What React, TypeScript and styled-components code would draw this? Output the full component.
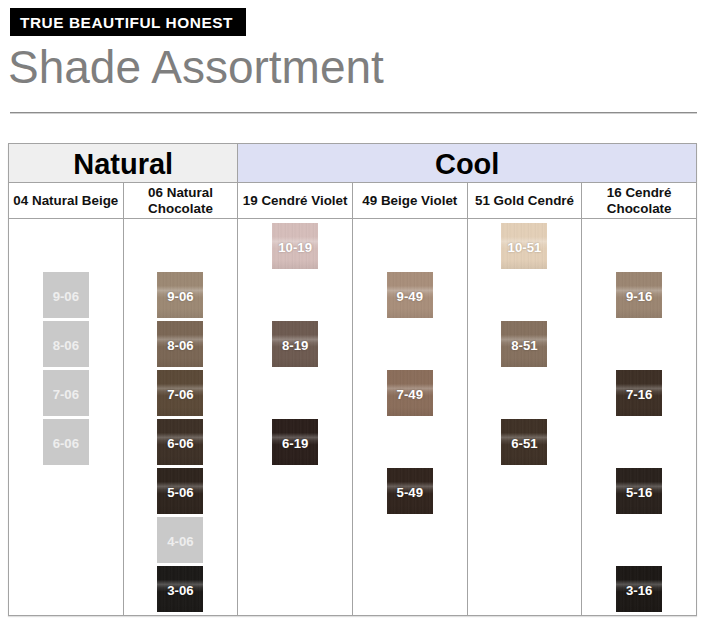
import React from "react";
import styled, { createGlobalStyle } from "styled-components";

const Global = createGlobalStyle`
  html, body { margin: 0; padding: 0; background: #ffffff; }
  body { font-family: "Liberation Sans", Arial, sans-serif; }
`;

const Page = styled.div`
  width: 715px;
  height: 642px;
  box-sizing: border-box;
  padding: 8px 18px 0 8px;
  display: flex;
  flex-direction: column;
  overflow: hidden;
`;

const Badge = styled.div`
  align-self: flex-start;
  margin-left: 2px;
  height: 28px;
  width: 236px;
  box-sizing: border-box;
  background: #000;
  color: #fff;
  font-weight: 700;
  font-size: 15.4px;
  letter-spacing: 0.55px;
  line-height: 29px;
  padding-left: 10px;
  white-space: nowrap;
`;

const Title = styled.h1`
  margin: 5px 0 0 0;
  font-weight: 400;
  font-size: 46px;
  line-height: 52px;
  color: #7f7f7f;
`;

const Rule = styled.div`
  margin: 19px 0 0 2px;
  height: 1px;
  background: #8c8c8c;
  border-bottom: 1px solid #d0d0d0;
`;

const Table = styled.div`
  margin-top: 29px;
  width: 689px;
  box-sizing: border-box;
  display: grid;
  grid-template-columns: repeat(6, 1fr);
  grid-template-rows: 38px 35px 396px;
  gap: 1px;
  padding: 1px;
  background: #a3a3a3;
  box-shadow: 0 1px 1px rgba(0, 0, 0, 0.12);
`;

const GroupHead = styled.div<{ $span: number; $bg: string }>`
  grid-column: span ${(p) => p.$span};
  background: ${(p) => p.$bg};
  display: flex;
  align-items: center;
  justify-content: center;
  font-weight: 700;
  font-size: 29px;
  color: #000;
  padding-top: 2px;
`;

const ColHead = styled.div`
  background: #fff;
  display: flex;
  align-items: center;
  justify-content: center;
  text-align: center;
  font-weight: 700;
  font-size: 13.4px;
  line-height: 16px;
  color: #111;
  white-space: nowrap;
`;

const ColBody = styled.div`
  background: #fff;
  display: grid;
  grid-template-rows: repeat(8, 46px);
  row-gap: 3px;
  padding-top: 4px;
  justify-items: center;
`;

const Swatch = styled.div<{ $row: number; $color: string; $empty?: boolean }>`
  grid-row: ${(p) => p.$row};
  width: 46px;
  height: 46px;
  display: flex;
  align-items: center;
  justify-content: center;
  padding-top: 2px;
  box-sizing: border-box;
  font-weight: 700;
  font-size: 13.2px;
  color: ${(p) => (p.$empty ? "#eeeeee" : "#ffffff")};
  text-shadow: ${(p) => (p.$empty ? "none" : "0 0 2px rgba(0,0,0,0.3)")};
  background-color: ${(p) => p.$color};
  background-image: ${(p) =>
    p.$empty
      ? "none"
      : `linear-gradient(180deg, rgba(255,255,255,0) 30%, rgba(255,255,255,0.26) 40%, rgba(255,255,255,0.1) 47%, rgba(255,255,255,0) 56%, rgba(0,0,0,0) 80%, rgba(0,0,0,0.06) 100%),
         repeating-linear-gradient(90deg, rgba(255,255,255,0.025) 0px, rgba(255,255,255,0.025) 1px, rgba(0,0,0,0.025) 2px, rgba(0,0,0,0) 3px, rgba(255,255,255,0.02) 5px, rgba(0,0,0,0.03) 7px)`};
`;

type Shade = { code: string; level: number; color: string; empty?: boolean };
type Column = { title: React.ReactNode; shades: Shade[] };

const GRAY = "#c9c9c9";

const columns: Column[] = [
  {
    title: "04 Natural Beige",
    shades: [
      { code: "9-06", level: 9, color: GRAY, empty: true },
      { code: "8-06", level: 8, color: GRAY, empty: true },
      { code: "7-06", level: 7, color: GRAY, empty: true },
      { code: "6-06", level: 6, color: GRAY, empty: true },
    ],
  },
  {
    title: (
      <>
        06 Natural
        <br />
        Chocolate
      </>
    ),
    shades: [
      { code: "9-06", level: 9, color: "#9c8873" },
      { code: "8-06", level: 8, color: "#7a6654" },
      { code: "7-06", level: 7, color: "#5b4937" },
      { code: "6-06", level: 6, color: "#3d3026" },
      { code: "5-06", level: 5, color: "#2e241d" },
      { code: "4-06", level: 4, color: GRAY, empty: true },
      { code: "3-06", level: 3, color: "#1b1917" },
    ],
  },
  {
    title: "19 Cendré Violet",
    shades: [
      { code: "10-19", level: 10, color: "#d5bdba" },
      { code: "8-19", level: 8, color: "#6d5a50" },
      { code: "6-19", level: 6, color: "#2b1f1b" },
    ],
  },
  {
    title: "49 Beige Violet",
    shades: [
      { code: "9-49", level: 9, color: "#a88e7a" },
      { code: "7-49", level: 7, color: "#8a6d5a" },
      { code: "5-49", level: 5, color: "#31241d" },
    ],
  },
  {
    title: "51 Gold Cendré",
    shades: [
      { code: "10-51", level: 10, color: "#e3cfb7" },
      { code: "8-51", level: 8, color: "#85705e" },
      { code: "6-51", level: 6, color: "#3f3126" },
    ],
  },
  {
    title: (
      <>
        16 Cendré
        <br />
        Chocolate
      </>
    ),
    shades: [
      { code: "9-16", level: 9, color: "#9b8571" },
      { code: "7-16", level: 7, color: "#3d2f25" },
      { code: "5-16", level: 5, color: "#29211c" },
      { code: "3-16", level: 3, color: "#1c1815" },
    ],
  },
];

export default function App() {
  return (
    <>
      <Global />
      <Page>
        <Badge>TRUE BEAUTIFUL HONEST</Badge>
        <Title>Shade Assortment</Title>
        <Rule />
        <Table>
          <GroupHead $span={2} $bg="#efefef">
            Natural
          </GroupHead>
          <GroupHead $span={4} $bg="#dde0f4">
            Cool
          </GroupHead>
          {columns.map((c, i) => (
            <ColHead key={"h" + i}>
              <span>{c.title}</span>
            </ColHead>
          ))}
          {columns.map((c, i) => (
            <ColBody key={"b" + i}>
              {c.shades.map((s) => (
                <Swatch
                  key={s.code}
                  $row={11 - s.level}
                  $color={s.color}
                  $empty={s.empty}
                >
                  {s.code}
                </Swatch>
              ))}
            </ColBody>
          ))}
        </Table>
      </Page>
    </>
  );
}
